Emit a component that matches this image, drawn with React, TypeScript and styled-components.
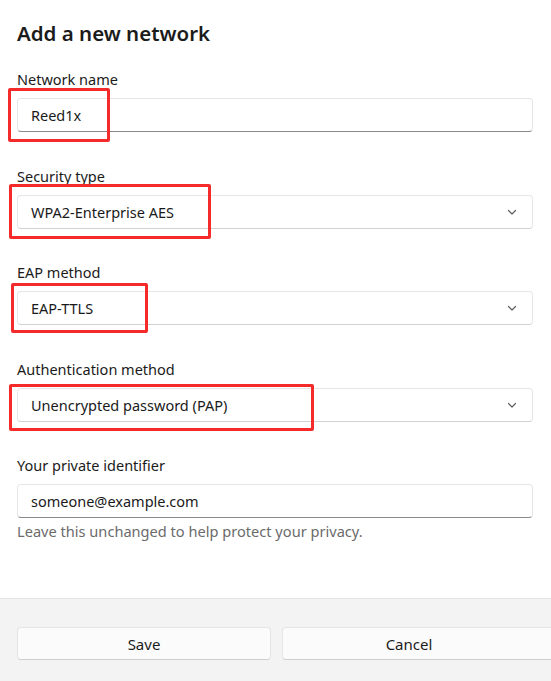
import React from "react";
import styled, { createGlobalStyle } from "styled-components";

const Global = createGlobalStyle`
  html, body { margin: 0; padding: 0; background: #ffffff; overflow: hidden; }
  body { font-family: "Noto Sans", "Open Sans", sans-serif; color: #1b1b1b; }
`;

const Dialog = styled.div`
  width: 551px;
  height: 681px;
  display: flex;
  flex-direction: column;
  overflow: hidden;
`;

const Body = styled.div`
  flex: 1;
  padding: 19px 18px 0 17px;
  display: flex;
  flex-direction: column;
`;

const Title = styled.h1`
  margin: 0 0 22px 0;
  font-size: 20.5px;
  font-weight: 600;
  line-height: 28px;
  color: #1b1b1b;
`;

const Group = styled.div<{ $last?: boolean }>`
  display: flex;
  flex-direction: column;
  margin-bottom: ${(p) => (p.$last ? 0 : 33.5)}px;
`;

const Label = styled.div`
  font-size: 14.5px;
  line-height: 20px;
  margin-bottom: 9px;
  color: #1b1b1b;
`;

const FieldWrap = styled.div`
  position: relative;
`;

const Field = styled.div<{ $input?: boolean }>`
  height: 34px;
  box-sizing: border-box;
  border: 1px solid #e6e6e6;
  border-bottom-color: ${(p) => (p.$input ? "#8a8a8a" : "#d2d2d2")};
  border-radius: 4px;
  background: #ffffff;
  display: flex;
  align-items: center;
  justify-content: space-between;
  padding: 0 13px 0 13px;
  font-size: 14.5px;
  color: #1a1a1a;
`;

const Chevron = styled.svg`
  width: 10px;
  height: 10px;
  color: #5f5f5f;
  margin-right: 2px;
`;

const Highlight = styled.div<{ $l: number; $t: number; $w: number; $h: number }>`
  position: absolute;
  left: ${(p) => p.$l}px;
  top: ${(p) => p.$t}px;
  width: ${(p) => p.$w}px;
  height: ${(p) => p.$h}px;
  box-sizing: border-box;
  border: 3px solid #f52b2b;
  border-radius: 2px;
  pointer-events: none;
`;

const Helper = styled.div`
  margin-top: 3px;
  font-size: 14.6px;
  line-height: 20px;
  color: #6b6b6b;
`;

const Footer = styled.div`
  height: 83px;
  background: #f3f3f3;
  border-top: 1px solid #e5e5e5;
  display: flex;
  padding: 28px 0 0 17px;
  gap: 11px;
  box-sizing: border-box;
`;

const Button = styled.div<{ $w: number; $pr?: number }>`
  flex: none;
  width: ${(p) => p.$w}px;
  height: 33px;
  box-sizing: border-box;
  background: #fbfbfb;
  border: 1px solid #e5e5e5;
  border-bottom-color: #cfcfcf;
  border-radius: 4px;
  display: flex;
  align-items: center;
  justify-content: center;
  padding-right: ${(p) => p.$pr ?? 0}px;
  font-size: 15px;
  color: #1b1b1b;
`;

const ChevronIcon = () => (
  <Chevron viewBox="0 0 10 10">
    <path d="M1.5 3.5 L5 7 L8.5 3.5" fill="none" stroke="currentColor" strokeWidth="1.2" strokeLinecap="round" strokeLinejoin="round" />
  </Chevron>
);

type Hl = { l: number; t: number; w: number; h: number };

const FormField = ({ label, value, input, hl }: { label: string; value: string; input?: boolean; hl?: Hl }) => (
  <Group>
    <Label>{label}</Label>
    <FieldWrap>
      <Field $input={input}>
        <span>{value}</span>
        {!input && <ChevronIcon />}
      </Field>
      {hl && <Highlight $l={hl.l} $t={hl.t} $w={hl.w} $h={hl.h} />}
    </FieldWrap>
  </Group>
);

export default function App() {
  return (
    <>
      <Global />
      <Dialog>
        <Body>
          <Title>Add a new network</Title>
          <FormField label="Network name" value="Reed1x" input hl={{ l: -9, t: -10, w: 102, h: 54 }} />
          <FormField label="Security type" value="WPA2-Enterprise AES" hl={{ l: -8, t: -11, w: 202, h: 55 }} />
          <FormField label="EAP method" value="EAP-TTLS" hl={{ l: -6, t: -8, w: 137, h: 50 }} />
          <FormField label="Authentication method" value="Unencrypted password (PAP)" hl={{ l: -8, t: -4, w: 305, h: 47 }} />
          <Group $last>
            <Label>Your private identifier</Label>
            <Field $input>
              <span>someone@example.com</span>
            </Field>
            <Helper>Leave this unchanged to help protect your privacy.</Helper>
          </Group>
        </Body>
        <Footer>
          <Button $w={254}>Save</Button>
          <Button $w={290} $pr={36}>Cancel</Button>
        </Footer>
      </Dialog>
    </>
  );
}
